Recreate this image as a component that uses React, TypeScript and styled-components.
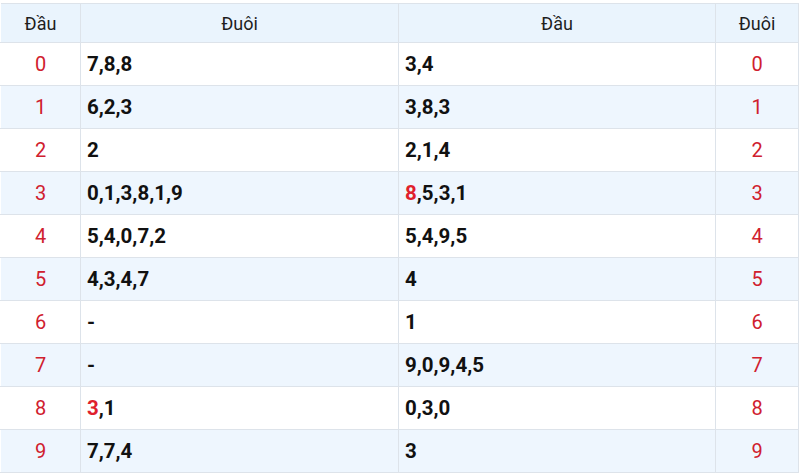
import React from 'react';
import styled, { createGlobalStyle } from 'styled-components';

const GlobalStyle = createGlobalStyle`
  html, body {
    margin: 0;
    padding: 0;
    background: #ffffff;
  }
  body {
    font-family: Roboto, "Noto Sans", Arial, sans-serif;
  }
`;

interface Row {
  head: number;
  tails: string;
  heads: string;
  tail: number;
  hotTails?: number;
  hotHeads?: number;
}

const rows: Row[] = [
  { head: 0, tails: '7,8,8', heads: '3,4', tail: 0 },
  { head: 1, tails: '6,2,3', heads: '3,8,3', tail: 1 },
  { head: 2, tails: '2', heads: '2,1,4', tail: 2 },
  { head: 3, tails: '0,1,3,8,1,9', heads: '8,5,3,1', tail: 3, hotHeads: 0 },
  { head: 4, tails: '5,4,0,7,2', heads: '5,4,9,5', tail: 4 },
  { head: 5, tails: '4,3,4,7', heads: '4', tail: 5 },
  { head: 6, tails: '-', heads: '1', tail: 6 },
  { head: 7, tails: '-', heads: '9,0,9,4,5', tail: 7 },
  { head: 8, tails: '3,1', heads: '0,3,0', tail: 8, hotTails: 0 },
  { head: 9, tails: '7,7,4', heads: '3', tail: 9 },
];

const Wrapper = styled.div`
  padding-top: 3px;
  width: 798px;
`;

const Table = styled.table`
  width: 794px;
  border-collapse: collapse;
  table-layout: fixed;
  border-top: 1px solid #dde3ea;
  border-right: 1px solid #dde3ea;
  border-bottom: 1px solid #dde3ea;
`;

const HeadCell = styled.th<{ $w: number; $first?: boolean }>`
  width: ${({ $w }) => $w}px;
  height: 38px;
  padding: 0;
  background: #eaf4fd;
  color: #1e1e1e;
  font-size: 18px;
  font-weight: 400;
  text-align: center;
  border-left: 1px solid ${({ $first }) => ($first ? 'transparent' : '#dde3ea')};
  border-bottom: 1px solid #dde3ea;
`;

const BodyRow = styled.tr<{ $odd: boolean }>`
  background: ${({ $odd }) => ($odd ? '#eef6fe' : '#ffffff')};
`;

const NumCell = styled.td<{ $first?: boolean }>`
  height: 42px;
  padding: 0;
  line-height: 40px;
  text-align: center;
  color: #d0202e;
  font-size: 20px;
  font-weight: 400;
  border-left: 1px solid ${({ $first }) => ($first ? 'transparent' : '#dde3ea')};
  border-bottom: 1px solid #dde3ea;
`;

const ValueCell = styled.td`
  height: 42px;
  padding: 0 0 0 6px;
  line-height: 40px;
  text-align: left;
  color: #111111;
  font-size: 20.5px;
  font-weight: 700;
  border-left: 1px solid #dde3ea;
  border-bottom: 1px solid #dde3ea;
`;

const Hot = styled.span`
  color: #e0202c;
`;

const Digits: React.FC<{ text: string; hot?: number }> = ({ text, hot }) => {
  if (hot === undefined) return <>{text}</>;
  const parts = text.split(',');
  return (
    <>
      {parts.map((p, i) => (
        <React.Fragment key={i}>
          {i > 0 && ','}
          {i === hot ? <Hot>{p}</Hot> : p}
        </React.Fragment>
      ))}
    </>
  );
};

export default function App() {
  return (
    <>
      <GlobalStyle />
      <Wrapper>
        <Table>
          <thead>
            <tr>
              <HeadCell $w={79} $first>Đầu</HeadCell>
              <HeadCell $w={317}>Đuôi</HeadCell>
              <HeadCell $w={316}>Đầu</HeadCell>
              <HeadCell $w={82}>Đuôi</HeadCell>
            </tr>
          </thead>
          <tbody>
            {rows.map((r, i) => (
              <BodyRow key={r.head} $odd={i % 2 === 1}>
                <NumCell $first>{r.head}</NumCell>
                <ValueCell>
                  <Digits text={r.tails} hot={r.hotTails} />
                </ValueCell>
                <ValueCell>
                  <Digits text={r.heads} hot={r.hotHeads} />
                </ValueCell>
                <NumCell>{r.tail}</NumCell>
              </BodyRow>
            ))}
          </tbody>
        </Table>
      </Wrapper>
    </>
  );
}
